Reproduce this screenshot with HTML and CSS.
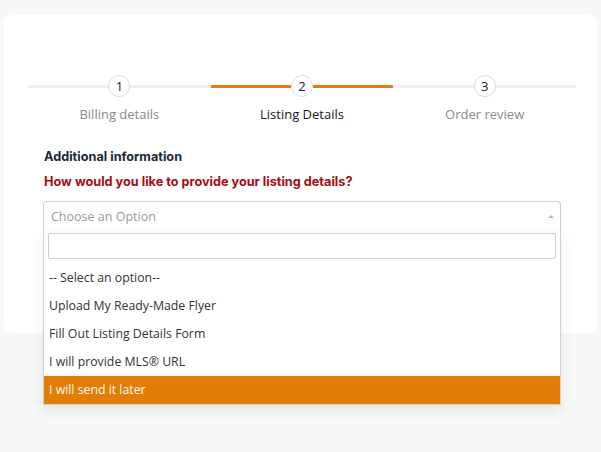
FILE: index.html
```html
<!DOCTYPE html>
<html>
<head>
<meta charset="utf-8">
<link rel="stylesheet" href="styles.css">
</head>
<body>
<div class="card">
  <div class="stepper">
    <div class="step">
      <div class="track"><span class="line"></span><span class="num">1</span><span class="line"></span></div>
      <div class="label">Billing details</div>
    </div>
    <div class="step active">
      <div class="track"><span class="line"></span><span class="num">2</span><span class="line"></span></div>
      <div class="label">Listing Details</div>
    </div>
    <div class="step">
      <div class="track"><span class="line"></span><span class="num">3</span><span class="line"></span></div>
      <div class="label">Order review</div>
    </div>
  </div>
  <div class="form">
    <div class="heading">Additional information</div>
    <div class="question">How would you like to provide your listing details?</div>
    <div class="select">
      <div class="selected">
        <span class="placeholder">Choose an Option</span>
        <span class="arrow"></span>
      </div>
      <div class="dropdown">
        <div class="search-wrap"><input class="search" type="text"></div>
        <ul class="options">
          <li>-- Select an option--</li>
          <li>Upload My Ready-Made Flyer</li>
          <li>Fill Out Listing Details Form</li>
          <li>I will provide MLS® URL</li>
          <li class="hl">I will send it later</li>
        </ul>
      </div>
    </div>
  </div>
</div>
</body>
</html>
```

FILE: styles.css
```css
html, body {
  margin: 0;
  padding: 0;
}
body {
  background: #f7f8fa;
  font-family: "Open Sans", "Liberation Sans", sans-serif;
  width: 601px;
  height: 452px;
  overflow: hidden;
}
.card {
  margin: 15px 4px 0;
  height: 318px;
  background: #fff;
  border-radius: 8px;
  box-sizing: border-box;
  padding-top: 60px;
}
.stepper {
  display: flex;
  margin: 0 21px 0 24px;
}
.step {
  flex: 1;
  display: flex;
  flex-direction: column;
  align-items: center;
}
.track {
  display: flex;
  align-items: center;
  width: 100%;
  height: 22px;
}
.line {
  flex: 1;
  height: 3px;
  background: #efefef;
}
.step.active .line {
  background: #e07f10;
}
.num {
  width: 20px;
  height: 20px;
  border: 1px solid #dcdcdc;
  border-radius: 50%;
  display: flex;
  align-items: center;
  justify-content: center;
  font-size: 13px;
  color: #222;
  background: #fff;
}
.label {
  margin-top: 8px;
  font-size: 13px;
  line-height: 18px;
  color: #8a8a8a;
}
.step.active .label {
  color: #1a1a1a;
}
.form {
  padding: 0 36px 0 39px;
  margin-top: 26px;
}
.heading {
  font-family: Inter, "Liberation Sans", sans-serif;
  font-weight: 700;
  font-size: 12.7px;
  line-height: 16px;
  color: #1e2836;
  padding-left: 1px;
}
.question {
  font-family: Inter, "Liberation Sans", sans-serif;
  font-weight: 700;
  font-size: 12.7px;
  line-height: 16px;
  color: #a30d12;
  margin-top: 9px;
  padding-left: 1px;
}
.select {
  position: relative;
  margin-top: 11px;
}
.selected {
  height: 29px;
  border: 1px solid #cfcfcf;
  border-bottom: none;
  border-radius: 4px 4px 0 0;
  display: flex;
  align-items: center;
  padding: 0 7px;
  box-sizing: content-box;
  padding-bottom: 2px;
}
.placeholder {
  flex: 1;
  font-size: 12.5px;
  color: #9a9a9a;
}
.arrow {
  width: 0;
  height: 0;
  border-left: 3px solid transparent;
  border-right: 3px solid transparent;
  border-bottom: 3px solid #b5b5b5;
  margin-right: -1px;
}
.dropdown {
  position: absolute;
  left: 0;
  right: 0;
  top: 31px;
  background: #fff;
  border: 1px solid #cfcfcf;
  border-top: none;
  box-shadow: 0 6px 14px rgba(0, 0, 0, 0.08);
  z-index: 2;
}
.search-wrap {
  padding: 1px 4px 5px;
}
.search {
  display: block;
  width: 100%;
  height: 26px;
  box-sizing: border-box;
  border: 1px solid #cfcfcf;
  border-radius: 2px;
  margin: 0;
  outline: none;
}
.options {
  list-style: none;
  margin: 0;
  padding: 0;
}
.options li {
  height: 28px;
  line-height: 28px;
  padding-left: 5px;
  font-size: 12.3px;
  color: #333;
}
.options li.hl {
  background: #e27d05;
  color: #fff8ec;
}
```
